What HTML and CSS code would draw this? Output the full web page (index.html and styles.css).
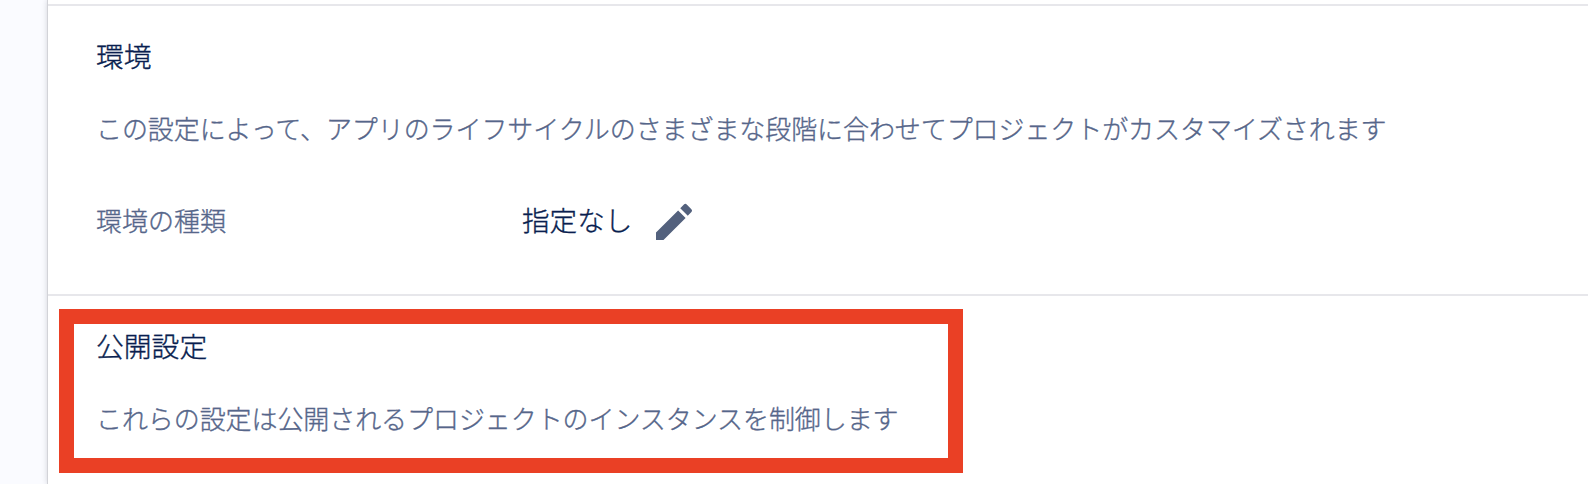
FILE: index.html
```html
<!DOCTYPE html>
<html lang="ja">
<head>
<meta charset="utf-8">
<title>プロジェクトの設定</title>
<link rel="stylesheet" href="styles.css">
</head>
<body>
<main class="panel">
  <section class="section section-environment">
    <h2 class="title">環境</h2>
    <p class="description">この設定によって、アプリのライフサイクルのさまざまな段階に合わせてプロジェクトがカスタマイズされます</p>
    <div class="field">
      <span class="label">環境の種類</span>
      <span class="value">指定なし</span>
      <svg class="edit" viewBox="0 0 24 24" aria-hidden="true"><path d="M3 17.25V21h3.75L17.81 9.94l-3.75-3.75L3 17.25zM20.71 7.04a.996.996 0 0 0 0-1.41l-2.34-2.34a.996.996 0 0 0-1.41 0l-1.83 1.83 3.75 3.75 1.83-1.83z"/></svg>
    </div>
  </section>
  <section class="section">
    <h2 class="title">公開設定</h2>
    <p class="description">これらの設定は公開されるプロジェクトのインスタンスを制御します</p>
  </section>
</main>
<div class="highlight"></div>
</body>
</html>
```

FILE: styles.css
```css
* { box-sizing: border-box; }
body {
  margin: 0;
  height: 484px;
  padding-left: 48px;
  overflow: hidden;
  position: relative;
  background: #fafbff;
  font-family: "Noto Sans CJK JP", sans-serif;
  -webkit-text-stroke: .35px;
}
.panel {
  height: 484px;
  padding-top: 4px;
  background: #fff;
  box-shadow: 0 0 0 1px #d2d3d8, 0 0 6px rgba(30, 35, 50, .24);
}
.section {
  padding: 29px 48px 0;
  border-top: 2px solid #e7e7eb;
}
.section-environment { height: 290px; }
.title {
  margin: 0;
  font-size: 27.8px;
  line-height: 40px;
  font-weight: 300;
  color: #091e4f;
}
.description {
  margin: 33px 0 0;
  font-size: 26px;
  line-height: 40px;
  font-weight: 300;
  letter-spacing: -.08px;
  color: #56668a;
  white-space: nowrap;
}
.field {
  display: flex;
  align-items: center;
  height: 48px;
  margin-top: 50px;
  font-weight: 300;
}
.label,
.value { padding-bottom: 6px; }
.label { width: 426px; font-size: 26px; color: #56668a; }
.value { width: 128px; padding-bottom: 7px; font-size: 27.6px; color: #091e4f; }
.edit { width: 48px; height: 48px; fill: #53617d; }
.highlight {
  position: absolute;
  left: 59px;
  top: 309px;
  width: 904px;
  height: 164px;
  border: 15px solid #ea4025;
}
```
